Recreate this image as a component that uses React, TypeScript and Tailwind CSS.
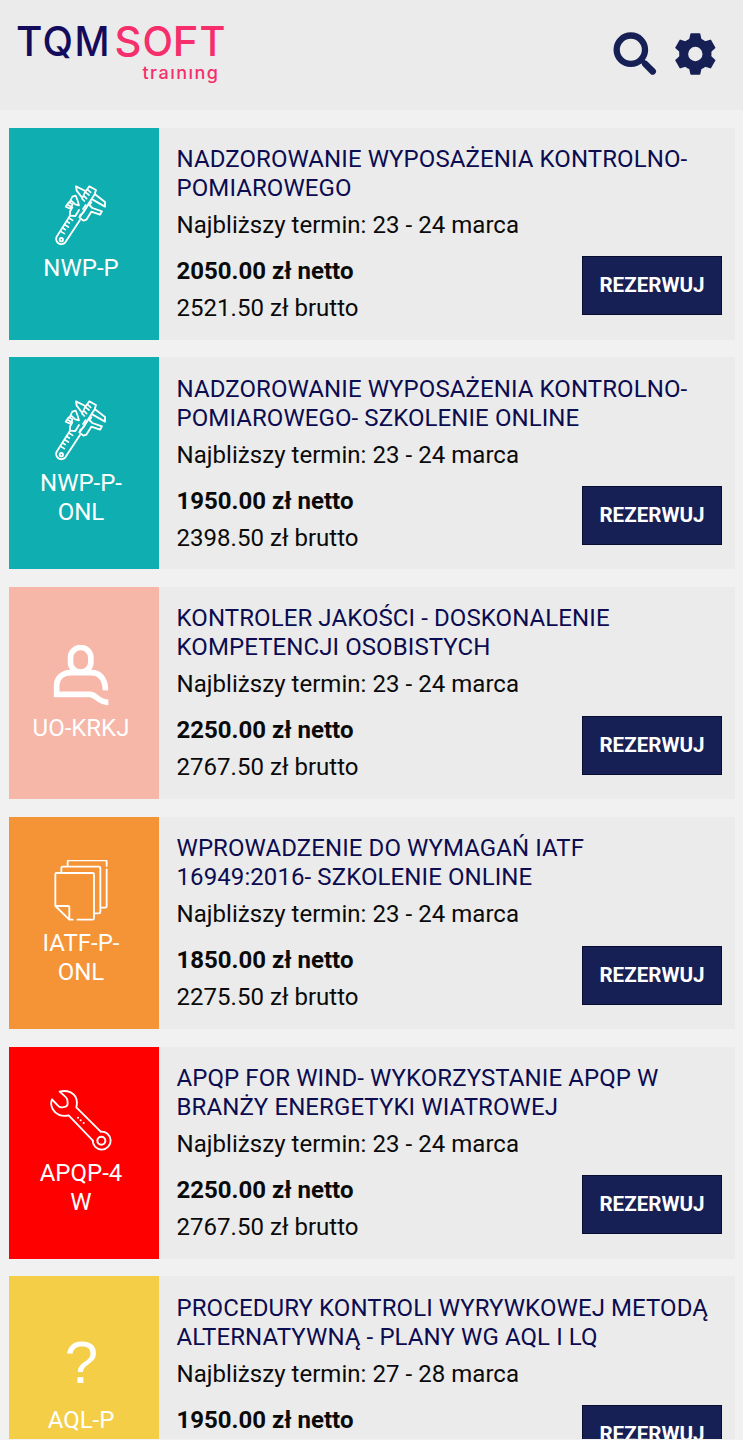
import type { ReactNode } from "react";

type Szkolenie = {
  kod: string[];
  kolor: string;
  ikona: ReactNode;
  tytul: string[];
  termin: string;
  netto: string;
  brutto: string;
};

function Ikona({ viewBox, children }: { viewBox: string; children: ReactNode }) {
  return (
    <svg
      viewBox={viewBox}
      className="w-[66px] h-[66px] mb-[3px] shrink-0"
      fill="none"
      stroke="white"
      strokeWidth="5.500"
      strokeLinejoin="round"
      strokeLinecap="round"
    >
      {children}
    </svg>
  );
}

function Suwmiarka() {
  return (
    <Ikona viewBox="24 32 198 198">
      <path d="M90 124L52 184A14 14 0 0 0 76 204L120 137" />
      <circle cx="64" cy="196" r="5" />
      <path d="M87 131l11 7M80 141l8 5M74 151l11 7M68 161l8 5M62 171l11 7" strokeWidth="5" />
      <path d="M90 124V112L97 99M90 124L106 125L117 107" />
      <path d="M97 67L107 64L113 79L117 93L106 90L92 77ZM92 77L89 84" strokeWidth="5" />
      <path d="M86 84L98 90L91 103L77 97ZM83 91L93 97" strokeWidth="5" />
      <path d="M127 71L110 49L108 36L136 50M138 50L148 36L168 47L164 60L122 125" />
      <path d="M136 51L127 71M137 54L147 62M142 45L152 54M131 64L140 73M126 73L133 80" strokeWidth="5" />
      <path d="M165 60L195 83V97L158 76M154 84L148 92L157 101L186 111L180 121L154 112L139 136L130 139L118 129L122 120" />
      <path d="M145 91L130 115M137 92L129 104" strokeWidth="5" />
    </Ikona>
  );
}

function Osoba() {
  return (
    <Ikona viewBox="54 44 198 198">
      <g strokeWidth="17" strokeLinecap="butt" strokeLinejoin="miter">
        <rect x="121.500" y="51.500" width="61" height="74" rx="30" />
        <path d="M226 180C227 145 208 127 184 127H122C95 127 80 146 80 164V192H180C200 193 203 216 235 216" />
      </g>
    </Ikona>
  );
}

function Dokumenty() {
  return (
    <Ikona viewBox="24 31 198 198">
      <path d="M98 210H88L46 169V74Q46 70 50 70H158Q162 70 162 74V206Q162 210 158 210H112M46 169H84Q88 169 88 173V209" />
      <path d="M64 67V55Q64 51 68 51H177Q181 51 181 55V187Q181 191 177 191H165" />
      <path d="M83 48V36Q83 32 87 32H196Q200 32 200 36V49M200 59V170Q200 174 196 174H184" />
    </Ikona>
  );
}

function Klucz() {
  return (
    <Ikona viewBox="24 30 198 198">
      <path d="M182 155L109 82C113 64 110 46 92 37Q75 30 59 35L75 49Q81 54 82 60L83 70Q83 78 77 80L67 82Q58 83 52 75L36 58Q30 72 38 87C46 103 65 111 86 106L158 181" />
      <path d="M182 155A27 27 0 1 1 158 181" />
      <circle cx="184" cy="182" r="12" strokeWidth="6" />
      <path d="M114 113h.1M122 121h.1M131 129h.1" strokeWidth="6" />
    </Ikona>
  );
}

function Pytajnik() {
  return (
    <div className="w-[66px] h-[76px] shrink-0 pl-px text-center font-['Liberation_Sans'] text-[60px] leading-[65px]">
      ?
    </div>
  );
}

const szkolenia: Szkolenie[] = [
  {
    kod: ["NWP-P"],
    kolor: "bg-[#0faeb0]",
    ikona: <Suwmiarka />,
    tytul: ["NADZOROWANIE WYPOSAŻENIA KONTROLNO-", "POMIAROWEGO"],
    termin: "23 - 24 marca",
    netto: "2050.00",
    brutto: "2521.50",
  },
  {
    kod: ["NWP-P-", "ONL"],
    kolor: "bg-[#0faeb0]",
    ikona: <Suwmiarka />,
    tytul: ["NADZOROWANIE WYPOSAŻENIA KONTROLNO-", "POMIAROWEGO- SZKOLENIE ONLINE"],
    termin: "23 - 24 marca",
    netto: "1950.00",
    brutto: "2398.50",
  },
  {
    kod: ["UO-KRKJ"],
    kolor: "bg-[#f6b6a8]",
    ikona: <Osoba />,
    tytul: ["KONTROLER JAKOŚCI - DOSKONALENIE", "KOMPETENCJI OSOBISTYCH"],
    termin: "23 - 24 marca",
    netto: "2250.00",
    brutto: "2767.50",
  },
  {
    kod: ["IATF-P-", "ONL"],
    kolor: "bg-[#f59337]",
    ikona: <Dokumenty />,
    tytul: ["WPROWADZENIE DO WYMAGAŃ IATF", "16949:2016- SZKOLENIE ONLINE"],
    termin: "23 - 24 marca",
    netto: "1850.00",
    brutto: "2275.50",
  },
  {
    kod: ["APQP-4", "W"],
    kolor: "bg-[#ff0000]",
    ikona: <Klucz />,
    tytul: ["APQP FOR WIND- WYKORZYSTANIE APQP W", "BRANŻY ENERGETYKI WIATROWEJ"],
    termin: "23 - 24 marca",
    netto: "2250.00",
    brutto: "2767.50",
  },
  {
    kod: ["AQL-P"],
    kolor: "bg-[#f4ce47]",
    ikona: <Pytajnik />,
    tytul: ["PROCEDURY KONTROLI WYRYWKOWEJ METODĄ", "ALTERNATYWNĄ - PLANY WG AQL I LQ"],
    termin: "27 - 28 marca",
    netto: "1950.00",
    brutto: "2398.50",
  },
];

const litery = [
  { znak: "T", x: 16, w: 26.5, kolor: "#150b5c" },
  { znak: "Q", x: 42.5, w: 30.5, kolor: "#150b5c" },
  { znak: "M", x: 74.5, w: 35, kolor: "#150b5c" },
  { znak: "S", x: 114.500, w: 27, kolor: "#f62e6c" },
  { znak: "O", x: 142.5, w: 30.5, kolor: "#f62e6c" },
  { znak: "F", x: 172.5, w: 26, kolor: "#f62e6c" },
  { znak: "T", x: 199.5, w: 26, kolor: "#f62e6c" },
];

function Logo() {
  return (
    <svg viewBox="0 0 240 110" className="w-[240px] h-[110px] font-[Inter]">
      {litery.map((l, i) => (
        <text
          key={i}
          x={l.x}
          y="55.500"
          fontSize="41"
          fontWeight="500"
          textLength={l.w}
          lengthAdjust="spacingAndGlyphs"
          fill={l.kolor}
        >
          {l.znak}
        </text>
      ))}
      <text x="142.500" y="78.500" fontSize="18" fontWeight="500" textLength="75.500" fill="#f62e6c">
        traınıng
      </text>
    </svg>
  );
}

function Naglowek() {
  return (
    <header className="h-[110px] bg-[#ebebeb] flex justify-between items-start">
      <Logo />
      <div className="flex gap-[18px] pt-[32px] pr-[27px]">
        <svg viewBox="39 36 132 132" className="w-[44px] h-[44px]" fill="none" stroke="#172055">
          <circle cx="92.500" cy="89" r="42.500" strokeWidth="19" />
          <path d="M122 118L134 130" strokeWidth="14" />
          <path d="M136 132L158 154" strokeWidth="20" strokeLinecap="round" />
        </svg>
        <svg viewBox="225 36 123 132" className="w-[41px] h-[44px]" fill="#172055">
          {[0, 60, 120, 180, 240, 300].map((kat) => (
            <path
              key={kat}
              d="M266 65L271 42Q271 40 274 40H298Q301 40 301 42L306 65Z"
              transform={`rotate(${kat} 286 102)`}
            />
          ))}
          <circle cx="286" cy="102" r="35" fill="none" stroke="#172055" strokeWidth="27" />
        </svg>
      </div>
    </header>
  );
}

function Karta({ s }: { s: Szkolenie }) {
  return (
    <article className="h-[212px] shrink-0 bg-[#ebebeb] flex">
      <div
        className={`${s.kolor} w-[150px] shrink-0 pr-[6px] pt-px flex flex-col items-center justify-center text-white`}
      >
        {s.ikona}
        {s.kod.map((linia) => (
          <span key={linia}>{linia}</span>
        ))}
      </div>

      <div className="flex-1 pt-[17.2px] pl-[17.5px] pr-[13px] whitespace-nowrap">
        <h2 className="text-[#0c0c50] tracking-[0.09px]">
          {s.tytul[0]}
          <br />
          {s.tytul[1]}
        </h2>
        <p className="mt-2 tracking-[0.04px]">Najbliższy termin: {s.termin}</p>
        <div className="mt-[17px] flex justify-between items-start">
          <div>
            <p className="font-bold">{s.netto} zł netto</p>
            <p className="mt-2 tracking-[0.03px]">{s.brutto} zł brutto</p>
          </div>
          <button className="-mt-[0.5px] w-[140px] h-[59px] bg-[#172055] border border-[#080c30] text-white text-[20.6px] font-bold">
            REZERWUJ
          </button>
        </div>
      </div>
    </article>
  );
}

export default function App() {
  return (
    <main className="w-[743px] h-[1440px] bg-[#f1f1f1] pb-px font-[Roboto,sans-serif] text-[24px] leading-[29px] text-[#0a0a0a]">
      <div className="h-full overflow-hidden">
        <Naglowek />
        <section className="pt-[17.6px] pl-[9px] pr-[8px] flex flex-col gap-[17.78px]">
          {szkolenia.map((s) => (
            <Karta key={s.kod.join("")} s={s} />
          ))}
        </section>
      </div>
    </main>
  );
}
